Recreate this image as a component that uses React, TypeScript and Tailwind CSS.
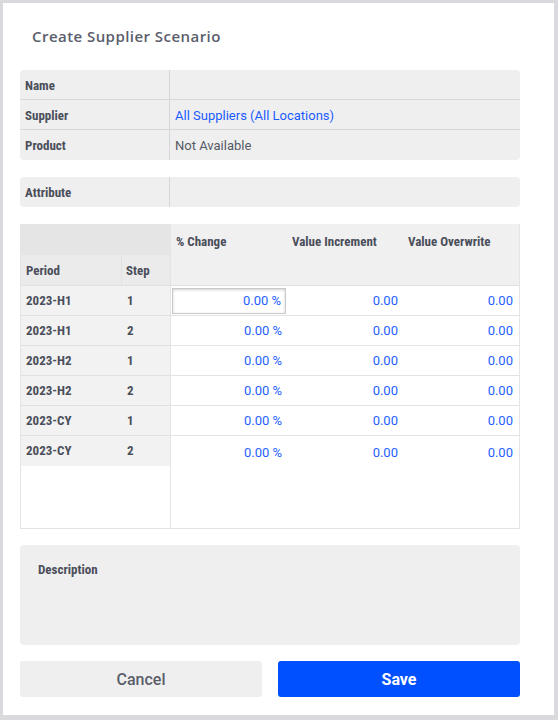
const label = "font-['Roboto_Condensed','Liberation_Sans_Narrow',Roboto,sans-serif] font-bold text-[13px] text-[#4a4e5a]";

const rows = [
  ["2023-H1", "1"],
  ["2023-H1", "2"],
  ["2023-H2", "1"],
  ["2023-H2", "2"],
  ["2023-CY", "1"],
  ["2023-CY", "2"],
];

function InfoRow({ name, value, blue, last }: { name: string; value?: string; blue?: boolean; last?: boolean }) {
  return (
    <div className={`flex h-[30px] ${last ? "" : "border-b border-[#d6d6db]"}`}>
      <div className={`w-[150px] shrink-0 border-r border-[#d6d6db] pl-[5px] pt-[2px] flex items-center ${label}`}>{name}</div>
      <div className={`flex items-center pl-[5px] pt-[2px] text-[13px] ${blue ? "text-[#1a5cff]" : "text-[#555a63]"}`}>{value}</div>
    </div>
  );
}

export default function App() {
  return (
    <div className="min-h-screen bg-[#dadade] pt-[3px] pl-[3px] font-['Roboto',sans-serif]">
      <div className="w-[551px] h-[712px] bg-white pl-[17px] pr-[34px] flex flex-col">
        <div className="h-[67px] pl-[12px] pt-[23px] font-['Open_Sans',sans-serif] font-semibold text-[15px] tracking-[0.45px] leading-[20px] text-[#5a5e6b]">
          Create Supplier Scenario
        </div>

        <div className="rounded-[4px] bg-[#efefef]">
          <InfoRow name="Name" />
          <InfoRow name="Supplier" value="All Suppliers (All Locations)" blue />
          <InfoRow name="Product" value="Not Available" last />
        </div>

        <div className="mt-[17px] rounded-[4px] bg-[#efefef]">
          <InfoRow name="Attribute" last />
        </div>

        <div className="mt-[17px] h-[305px] border border-t-0 border-[#e4e4e8] flex">
          <div className="w-[150px] shrink-0 border-r border-[#e4e4e8] flex flex-col">
            <div className="h-[31px] bg-[#e5e5e5]" />
            <div className="h-[31px] bg-[#ebebeb] flex border-b border-[#e0e0e0]">
              <div className={`w-[101px] pl-[5px] pt-[2px] flex items-center border-r border-[#e0e0e0] ${label}`}>Period</div>
              <div className={`flex-1 pl-[4px] pt-[2px] flex items-center ${label}`}>Step</div>
            </div>
            {rows.map(([p, s], i) => (
              <div key={i} className={`h-[30px] bg-[#f2f2f2] flex ${i < rows.length - 1 ? "border-b border-[#e0e0e0]" : ""}`}>
                <div className={`w-[101px] pl-[5px] flex items-center ${label}`}>{p}</div>
                <div className={`flex-1 pl-[5px] flex items-center ${label}`}>{s}</div>
              </div>
            ))}
          </div>
          <div className="flex-1 flex flex-col">
            <div className="h-[62px] bg-[#f0f0f0] grid grid-cols-3 border-b border-[#e0e0e0]">
              <div className={`pl-[5px] pt-[8px] ${label}`}>% Change</div>
              <div className={`pl-[5px] pt-[8px] ${label}`}>Value Increment</div>
              <div className={`pl-[5px] pt-[8px] ${label}`}>Value Overwrite</div>
            </div>
            {rows.map((_, i) => (
              <div key={i} className={`grid grid-cols-3 text-[13px] text-[#1f5fff] ${i < rows.length - 1 ? "h-[30px] border-b border-[#e3e3e3] pt-[1px]" : "h-[32px] pt-[1px]"}`}>
                <div className="p-[1px] flex">
                  <div className={`flex-1 flex items-center justify-end pr-[4px] ${i === 0 ? "border border-[#c9c9c9] shadow-[inset_0_1px_3px_rgba(0,0,0,0.18)]" : ""}`}>
                    0.00 %
                  </div>
                </div>
                <div className="flex items-center justify-end pr-[5px]">0.00</div>
                <div className="flex items-center justify-end pr-[6px]">0.00</div>
              </div>
            ))}
          </div>
        </div>

        <div className="mt-[16px] h-[100px] rounded-[4px] bg-[#efefef] pl-[18px] pt-[17px]">
          <div className={`${label} leading-[16px]`}>Description</div>
        </div>

        <div className="mt-[16px] flex gap-[16px]">
          <button className="flex-1 h-[36px] rounded-[3px] bg-[#efefef] pt-[1px] text-[16px] font-medium text-[#5a5e6b]">Cancel</button>
          <button className="flex-1 h-[36px] rounded-[3px] bg-[#0050ff] pt-[1px] text-[16px] font-bold text-white">Save</button>
        </div>
      </div>
    </div>
  );
}
